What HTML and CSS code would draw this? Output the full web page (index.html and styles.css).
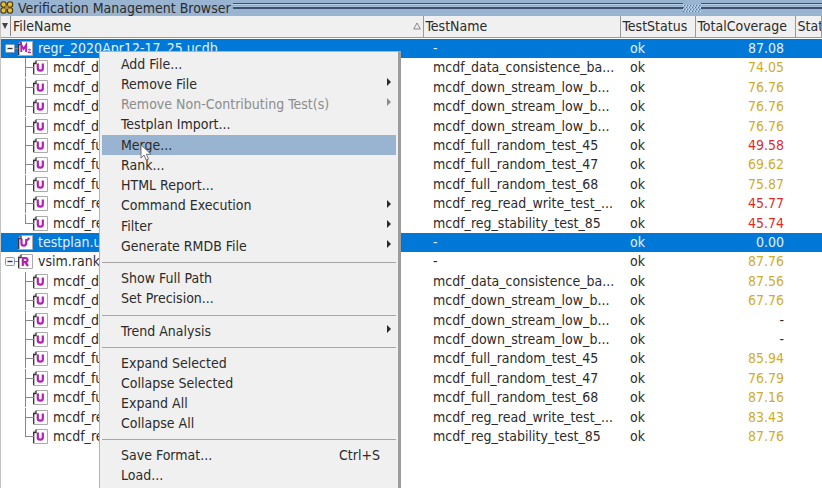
FILE: index.html
```
<!DOCTYPE html>
<html lang="en">
<head>
<meta charset="utf-8">
<title>Verification Management Browser</title>
<link rel="stylesheet" href="styles.css">
</head>
<body>
<main class="browser">
  <header class="titlebar">
    <svg class="logo" width="15" height="14" viewBox="0 0 15 14" aria-hidden="true">
      <g fill="#e8bc3c" stroke="#4a3a10" stroke-width="1.100">
        <circle cx="3.500" cy="3.500" r="2.700"/><circle cx="10" cy="3.500" r="2.700"/>
        <circle cx="3.500" cy="9.500" r="2.700"/><circle cx="10" cy="9.500" r="2.700"/>
      </g>
      <path d="M5 4.500l3.500 3.500M8.500 4.500l-3.500 3.500" stroke="#b08a28" stroke-width="1.500"/>
    </svg>
    <h1>Verification Management Browser</h1>
    <span class="rails"></span>
    <svg class="grip" width="18" height="9" viewBox="0 0 18 9" aria-hidden="true">
      <g fill="none" stroke="#5a7493" stroke-dasharray="1 2">
        <path d="M1 1.500h17M0 3.500h17M1 5.500h17M0 7.500h17"/>
      </g>
      <g fill="none" stroke="#d3e4f5" stroke-dasharray="1 2">
        <path d="M0 1.500h17M2 3.500h16M0 5.500h17M2 7.500h16"/>
      </g>
    </svg>
    <span class="rails rails-end"></span>
  </header>
  <table class="tests">
    <colgroup><col class="c-file"><col class="c-name"><col class="c-status"><col class="c-cover"><col></colgroup>
    <thead>
      <tr>
        <th><div class="head-file"><span class="pick"><svg width="6" height="6" viewBox="0 0 6 6"><path d="M0 0h6L3 6z" fill="#444"/></svg></span><span>FileName</span><svg class="sort" width="8" height="8" viewBox="0 0 8 8"><path d="M4 1L7.300 7H.7z" fill="none" stroke="#888"/></svg></div></th>
        <th>TestName</th><th>TestStatus</th><th>TotalCoverage</th><th>State</th>
      </tr>
    </thead>
    <tbody id="rows"></tbody>
  </table>
</main>
<nav class="menu" aria-label="Context menu">
  <button>Add File...</button>
  <button class="sub">Remove File</button>
  <button class="sub" disabled>Remove Non-Contributing Test(s)</button>
  <button>Testplan Import...</button>
  <button class="active">Merge...</button>
  <button>Rank...</button>
  <button>HTML Report...</button>
  <button class="sub">Command Execution</button>
  <button class="sub">Filter</button>
  <button class="sub">Generate RMDB File</button>
  <hr>
  <button>Show Full Path</button>
  <button>Set Precision...</button>
  <hr>
  <button class="sub">Trend Analysis</button>
  <hr>
  <button>Expand Selected</button>
  <button>Collapse Selected</button>
  <button>Expand All</button>
  <button>Collapse All</button>
  <hr>
  <button>Save Format...<span class="key">Ctrl+S</span></button>
  <button>Load...</button>
</nav>
<svg class="pointer" width="12" height="18" viewBox="0 0 12 18" aria-hidden="true"><path d="M1 1v13l3-3 2.200 5 2.300-1-2.200-4.800H11z" fill="#fff" stroke="#666" stroke-width=".9"/></svg>
<script src="rows.js"></script>
</body>
</html>
```
FILE: styles.css
```
* { box-sizing: border-box; }
body {
  margin: 0;
  height: 100vh;
  overflow: hidden;
  position: relative;
  background: #fff;
  color: #2b2b2b;
  font: 14px/19px "DejaVu Sans Condensed", "DejaVu Sans", sans-serif;
  font-stretch: condensed;
}
.browser { min-height: 100vh; border-left: 1px solid #c4c4c4; }
.titlebar {
  display: flex;
  align-items: center;
  height: 16px;
  margin-left: -1px;
  background: #99b4d1;
}
.titlebar h1 { margin: 0 2px 0 3px; font-size: 14px; line-height: 14px; font-weight: 400; white-space: nowrap; }
.logo, .grip { flex: none; }
.rails {
  flex: 450 1 0;
  height: 6px;
  margin-bottom: 4px;
  border: solid #3c5069;
  border-width: 1px 0 2px;
  background: linear-gradient(#bcd3ea 1px, #8ba8c8 1px 2px, #a9c4df 2px);
}
.rails-end { flex-grow: 121; }
.tests { width: 100%; table-layout: fixed; border-collapse: collapse; font-size: 14px; }
.c-file { width: 422px; }
.c-name { width: 197px; }
.c-status { width: 75px; }
.c-cover { width: 100px; }
th {
  height: 21px;
  padding: 0 0 0 2px;
  border-right: 1px solid #999;
  border-bottom: 1px solid #999;
  background: #f0f0f0;
  font-weight: 400;
  text-align: left;
  white-space: nowrap;
  overflow: hidden;
}
th:first-child { padding: 0; }
.head-file { display: flex; align-items: center; height: 20px; }
.pick { display: flex; align-items: center; width: 10px; height: 20px; padding-left: 1px; margin-right: 2px; border-right: 1px solid #888; }
.sort { margin-left: auto; margin-right: 2px; }
tbody::before { content: ""; display: block; height: 1px; }
td { height: 19px; padding: 0; line-height: 19px; white-space: nowrap; overflow: hidden; }
tr:nth-child(5n+2) td, tr:nth-child(5n+4) td { height: 20px; }
td:nth-child(2), td:nth-child(3) { padding-left: 10px; }
td:nth-child(4) { padding-right: 11px; text-align: right; color: #d0ac2c; }
tr td.low { color: #e02b2b; }
tr td.none { color: #2b2b2b; }
tr.selected td { background: #0078d7; color: #e4f1fd; }
.node { display: flex; align-items: center; height: 19px; }
.node svg { flex: none; display: block; }
.branch { position: relative; width: 8px; height: 19px; margin-left: 24px; border-left: 1px solid #888; }
.branch::after { content: ""; position: absolute; left: 0; top: 9px; width: 8px; border-top: 1px solid #888; }
.last .branch { height: 10px; margin-bottom: 9px; }
.label { margin-left: 5px; }
.expander { width: 17px; height: 11px; padding: 0 0 0 4px; border: 0; background: none; }
.menu {
  position: absolute;
  left: 99px;
  top: 51px;
  bottom: -16px;
  width: 302px;
  padding: 2px;
  border: 1px solid #b4b4b4;
  border-right: 3px solid #9c9c9c;
  background: #f0f0f0;
}
.menu button {
  display: flex;
  align-items: center;
  width: 100%;
  height: 20px;
  padding: 0 16px 0 19px;
  border: 0;
  background: none;
  color: #2b2b2b;
  font: inherit;
  text-align: left;
}
.menu button:nth-of-type(4n):nth-of-type(-n+12) { height: 21px; }
.menu button:disabled { color: #8c8c8c; }
.menu .active { background: #99b4d1; }
.menu .sub { justify-content: space-between; padding-right: 5px; }
.sub::after { content: ""; border: 4px solid transparent; border-left-color: currentColor; border-right: 0; margin-bottom: 4px; }
.key { margin-left: auto; }
.menu hr { height: 1px; margin: 6px 0 5px; border: 0; background: #a6a6a6; }
.pointer { position: absolute; left: 140px; top: 144px; }
```
FILE: rows.js
```
const tests = ["data_consistence_ba...", "down_stream_low_b...", "down_stream_low_b...", "down_stream_low_b...",
  "full_random_test_45", "full_random_test_47", "full_random_test_68", "reg_read_write_test_...", "reg_stability_test_85"];
const groups = [
  { file: "regr_2020Apr12-17_25.ucdb", mark: "M", cover: "87.08", selected: true, open: true,
    covers: ["74.05", "76.76", "76.76", "76.76", "49.58", "69.62", "75.87", "45.77", "45.74"] },
  { file: "testplan.ucdb", mark: "V", cover: "0.00", selected: true, covers: [] },
  { file: "vsim.rank", mark: "R", cover: "87.76", open: true,
    covers: ["87.56", "67.76", "-", "-", "85.94", "76.79", "87.16", "83.43", "87.76"] }
];
const marks = {
  U: '<path d="M4.800 3.500v5q0 2.200 2.500 2.200t2.500-2.200v-5"/>',
  V: '<path d="M3.500 3.500v5q0 2.200 2.300 2.200t2.400-2.700V4M8 6l3.500-3"/>',
  R: '<path d="M4.800 12V4h2.700q2 0 2 2t-2 2H4.800M7 8l3 4"/>',
  M: '<path d="M3.300 11V4l2.400 4L8.100 4v7" stroke-width="1.900"/><path d="M10 8.500q2.500-1 2.500.3l-2.500 2.700h3" stroke-width="1"/>'
};
const icon = m => `<svg width="15" height="15" viewBox="0 0 15 15"><path d="M3 .5h11.500v14H.5V3z" fill="#fff" stroke="#aaa"/><path d="M.7 14V3.500h2.300V.7" fill="none" stroke="#333" stroke-width="1.300"/><g fill="none" stroke="#b51fb5" stroke-width="2.200">${marks[m]}</g></svg>`;
const expander = '<button class="expander" aria-label="Collapse"><svg width="13" height="11" viewBox="0 0 13 11"><path d="M9 5.500h4" stroke="#888"/><rect x=".5" y="1.500" width="9" height="8" rx="1" fill="#f5f7fa" stroke="#8298b5"/><path d="M2.500 5.500h5" stroke="#333" stroke-width="1.300"/></svg></button>';
const tone = c => c === "-" ? "none" : parseFloat(c) < 50 ? "low" : "";
const row = (cls, node, name, cover, tint) =>
  `<tr class="${cls}"><td><div class="node">${node}</div></td><td>${name}</td><td>ok</td><td class="${tint}">${cover}</td><td></td></tr>`;
document.getElementById("rows").innerHTML = groups.map(g =>
  row(g.selected ? "selected" : "", (g.open ? expander : '<span class="expander"></span>') + icon(g.mark) + `<span class="label">${g.file}</span>`, "-", g.cover, "") +
  g.covers.map((c, i) => row(i === 8 ? "last" : "", '<span class="branch"></span>' + icon("U") + `<span class="label">mcdf_${tests[i]}</span>`, "mcdf_" + tests[i], c, tone(c))).join("")
).join("");
```
